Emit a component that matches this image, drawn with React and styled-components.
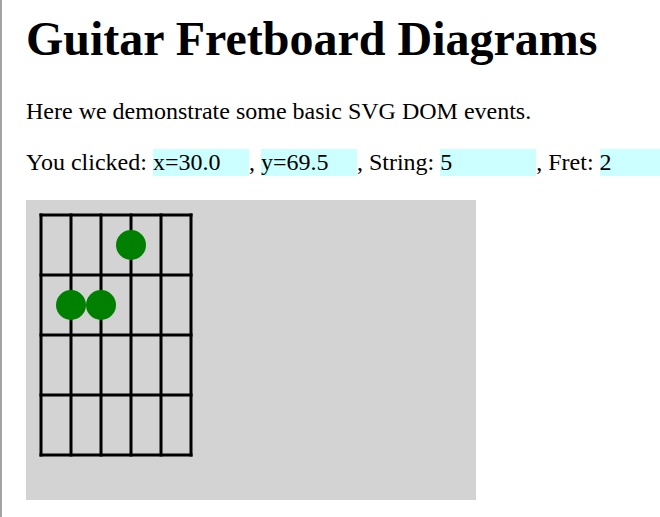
import React, { useState } from 'react';
import styled, { createGlobalStyle } from 'styled-components';

const STRINGS = 6;
const FRETS = 4;
const dots = [
	{ id: 1, string: 4, fret: 1 },
	{ id: 2, string: 2, fret: 2 },
	{ id: 3, string: 3, fret: 2 },
];

const GlobalStyle = createGlobalStyle`
  html {
    overflow: hidden;
    min-height: 100%;
    box-sizing: border-box;
    border-left: 2px solid #a3a3a3;
  }
  body {
    margin: 0;
    padding: 0 0 0 24px;
    font-family: "Liberation Serif", "Times New Roman", serif;
    font-size: 24px;
    color: #000;
    background: #fff;
  }
`;

const Title = styled.h1`
  margin: 11px 0 32px;
  font-size: 48px;
  font-weight: bold;
  line-height: normal;
  white-space: nowrap;
`;

const Text = styled.p`
  margin: 24px 0;
  line-height: normal;
  white-space: nowrap;
`;

const Value = styled.span`
  display: inline-block;
  width: 96px;
  background: #ccffff;
`;

const Board = styled.svg`
  display: block;
  width: 450px;
  height: 300px;
  background: #d3d3d3;
  cursor: pointer;
`;

const Fretboard = ({ onPick }) => {
	const handleClick = (e) => {
		const box = e.currentTarget.getBoundingClientRect();
		const x = ((e.clientX - box.left) / box.width) * 300;
		const y = ((e.clientY - box.top) / box.height) * 200;
		const string = Math.round((x - 10) / 20) + 1;
		const fret = Math.ceil((y - 10) / 40);
		onPick({ x, y, string, fret });
	};

	return (
		<Board viewBox="0 0 300 200" onClick={handleClick}>
			<g stroke="#000" strokeWidth="2" strokeLinecap="square">
				{Array.from({ length: STRINGS }).map((_, i) => (
					<line key={`s${i}`} x1={10 + i * 20} y1={10} x2={10 + i * 20} y2={170} />
				))}
				{Array.from({ length: FRETS + 1 }).map((_, j) => (
					<line key={`f${j}`} x1={10} y1={10 + j * 40} x2={110} y2={10 + j * 40} />
				))}
			</g>
			{dots.map(({ id, string, fret }) => (
				<circle key={id} cx={10 + (string - 1) * 20} cy={fret * 40 - 10} r="10" fill="#008000" />
			))}
		</Board>
	);
};

const App = () => {
	const [pick, setPick] = useState({ x: 30, y: 69.5, string: 5, fret: 2 });

	return (
		<>
			<GlobalStyle />
			<Title>Guitar Fretboard Diagrams</Title>
			<Text>Here we demonstrate some basic SVG DOM events.</Text>
			<Text>
				You clicked: <Value>x={pick.x.toFixed(1)}</Value>, <Value>y={pick.y.toFixed(1)}</Value>, String:{' '}
				<Value>{pick.string}</Value>, Fret: <Value>{pick.fret}</Value>
			</Text>
			<Fretboard onPick={setPick} />
		</>
	);
};

export default App;
